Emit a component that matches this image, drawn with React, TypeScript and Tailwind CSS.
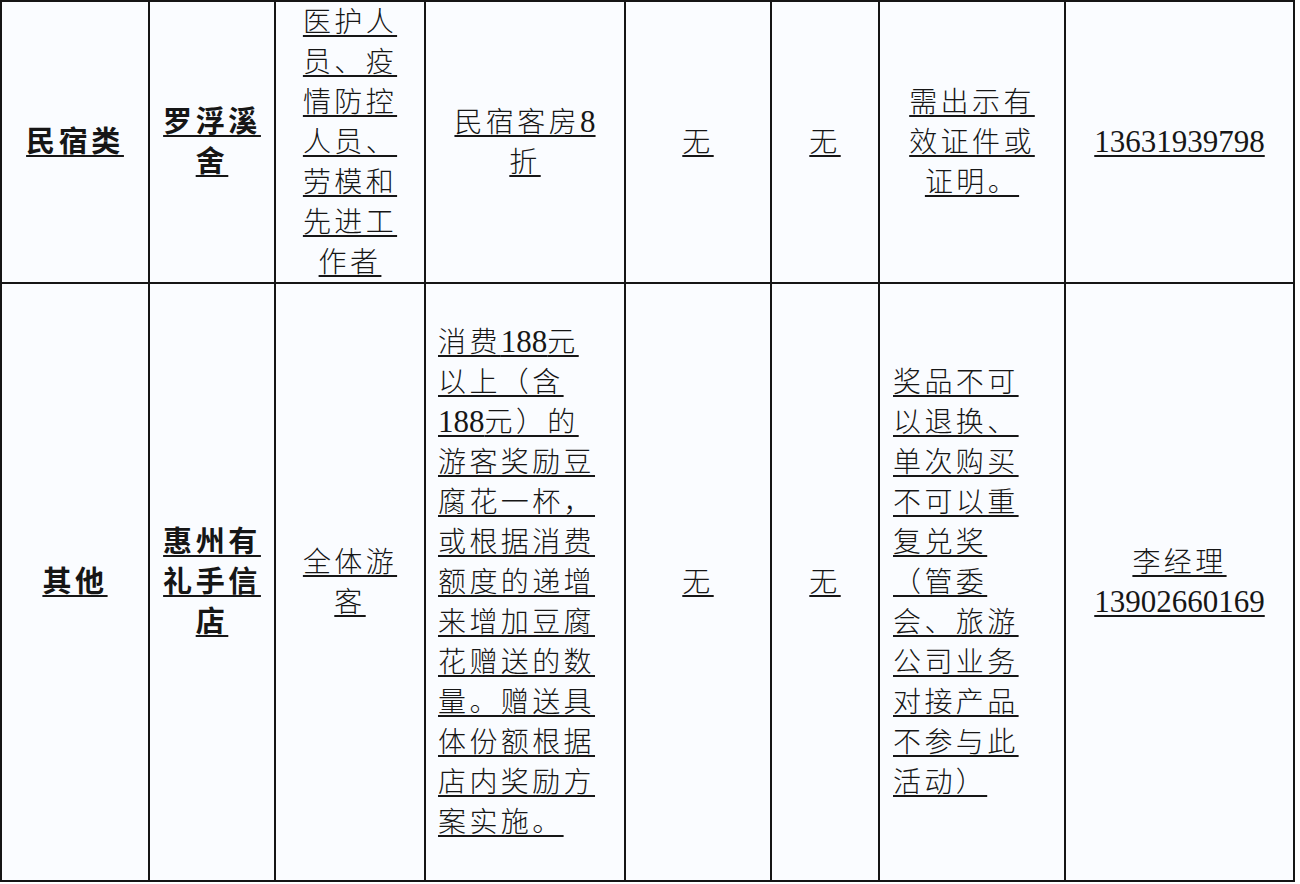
import React from "react";

type CellProps = {
  lines: string[];
  bold?: boolean;
  align?: "center" | "left";
  pl?: string;
};

function Line({ text, bold }: { text: string; bold?: boolean }) {
  const parts = text.split(/(\d+)/).filter((p) => p.length > 0);
  return (
    <div
      className={
        "h-[40px] leading-[40px] text-[31px] whitespace-pre text-[#161616] underline decoration-2 underline-offset-[3px] " +
        (bold ? "font-bold" : "font-light")
      }
    >
      {parts.map((p, i) =>
        /^\d+$/.test(p) ? (
          <span key={i} className="text-[31px] tracking-normal">
            {p}
          </span>
        ) : (
          <span
            key={i}
            className={bold ? "text-[29px] tracking-[3.6px]" : "text-[28px] tracking-[3.4px]"}
          >
            {p}
          </span>
        )
      )}
    </div>
  );
}

function Cell({ lines, bold, align = "center", pl }: CellProps) {
  return (
    <div
      className={
        "flex flex-col justify-center border-r-2 border-b-2 border-[#151515] " +
        (align === "center" ? "items-center " : "items-start ") +
        (pl ?? "")
      }
    >
      {lines.map((l, i) => (
        <Line key={i} text={l} bold={bold} />
      ))}
    </div>
  );
}

export default function App() {
  return (
    <div
      className="w-[1300px] h-[884px] bg-white"
      style={{ fontFamily: '"Liberation Serif", "Noto Sans CJK SC", serif' }}
    >
      <div className="w-[1295px] border-l-2 border-t-2 border-[#151515] bg-[#fafcff] grid grid-cols-[148px_126px_150px_200px_146px_108px_186px_229px] grid-rows-[282px_598px]">
        <Cell lines={["民宿类"]} bold />
        <Cell lines={["罗浮溪", "舍"]} bold />
        <Cell lines={["医护人", "员、疫", "情防控", "人员、", "劳模和", "先进工", "作者"]} />
        <Cell lines={["民宿客房8", "折"]} />
        <Cell lines={["无"]} />
        <Cell lines={["无"]} />
        <Cell lines={["需出示有", "效证件或", "证明。"]} />
        <Cell lines={["13631939798"]} />

        <Cell lines={["其他"]} bold />
        <Cell lines={["惠州有", "礼手信", "店"]} bold />
        <Cell lines={["全体游", "客"]} />
        <Cell
          align="left"
          pl="pl-[12px]"
          lines={[
            "消费188元",
            "以上（含",
            "188元）的",
            "游客奖励豆",
            "腐花一杯，",
            "或根据消费",
            "额度的递增",
            "来增加豆腐",
            "花赠送的数",
            "量。赠送具",
            "体份额根据",
            "店内奖励方",
            "案实施。",
          ]}
        />
        <Cell lines={["无"]} />
        <Cell lines={["无"]} />
        <Cell
          align="left"
          pl="pl-[13px]"
          lines={[
            "奖品不可",
            "以退换、",
            "单次购买",
            "不可以重",
            "复兑奖",
            "（管委",
            "会、旅游",
            "公司业务",
            "对接产品",
            "不参与此",
            "活动）",
          ]}
        />
        <Cell lines={["李经理", "13902660169"]} />
      </div>
    </div>
  );
}
